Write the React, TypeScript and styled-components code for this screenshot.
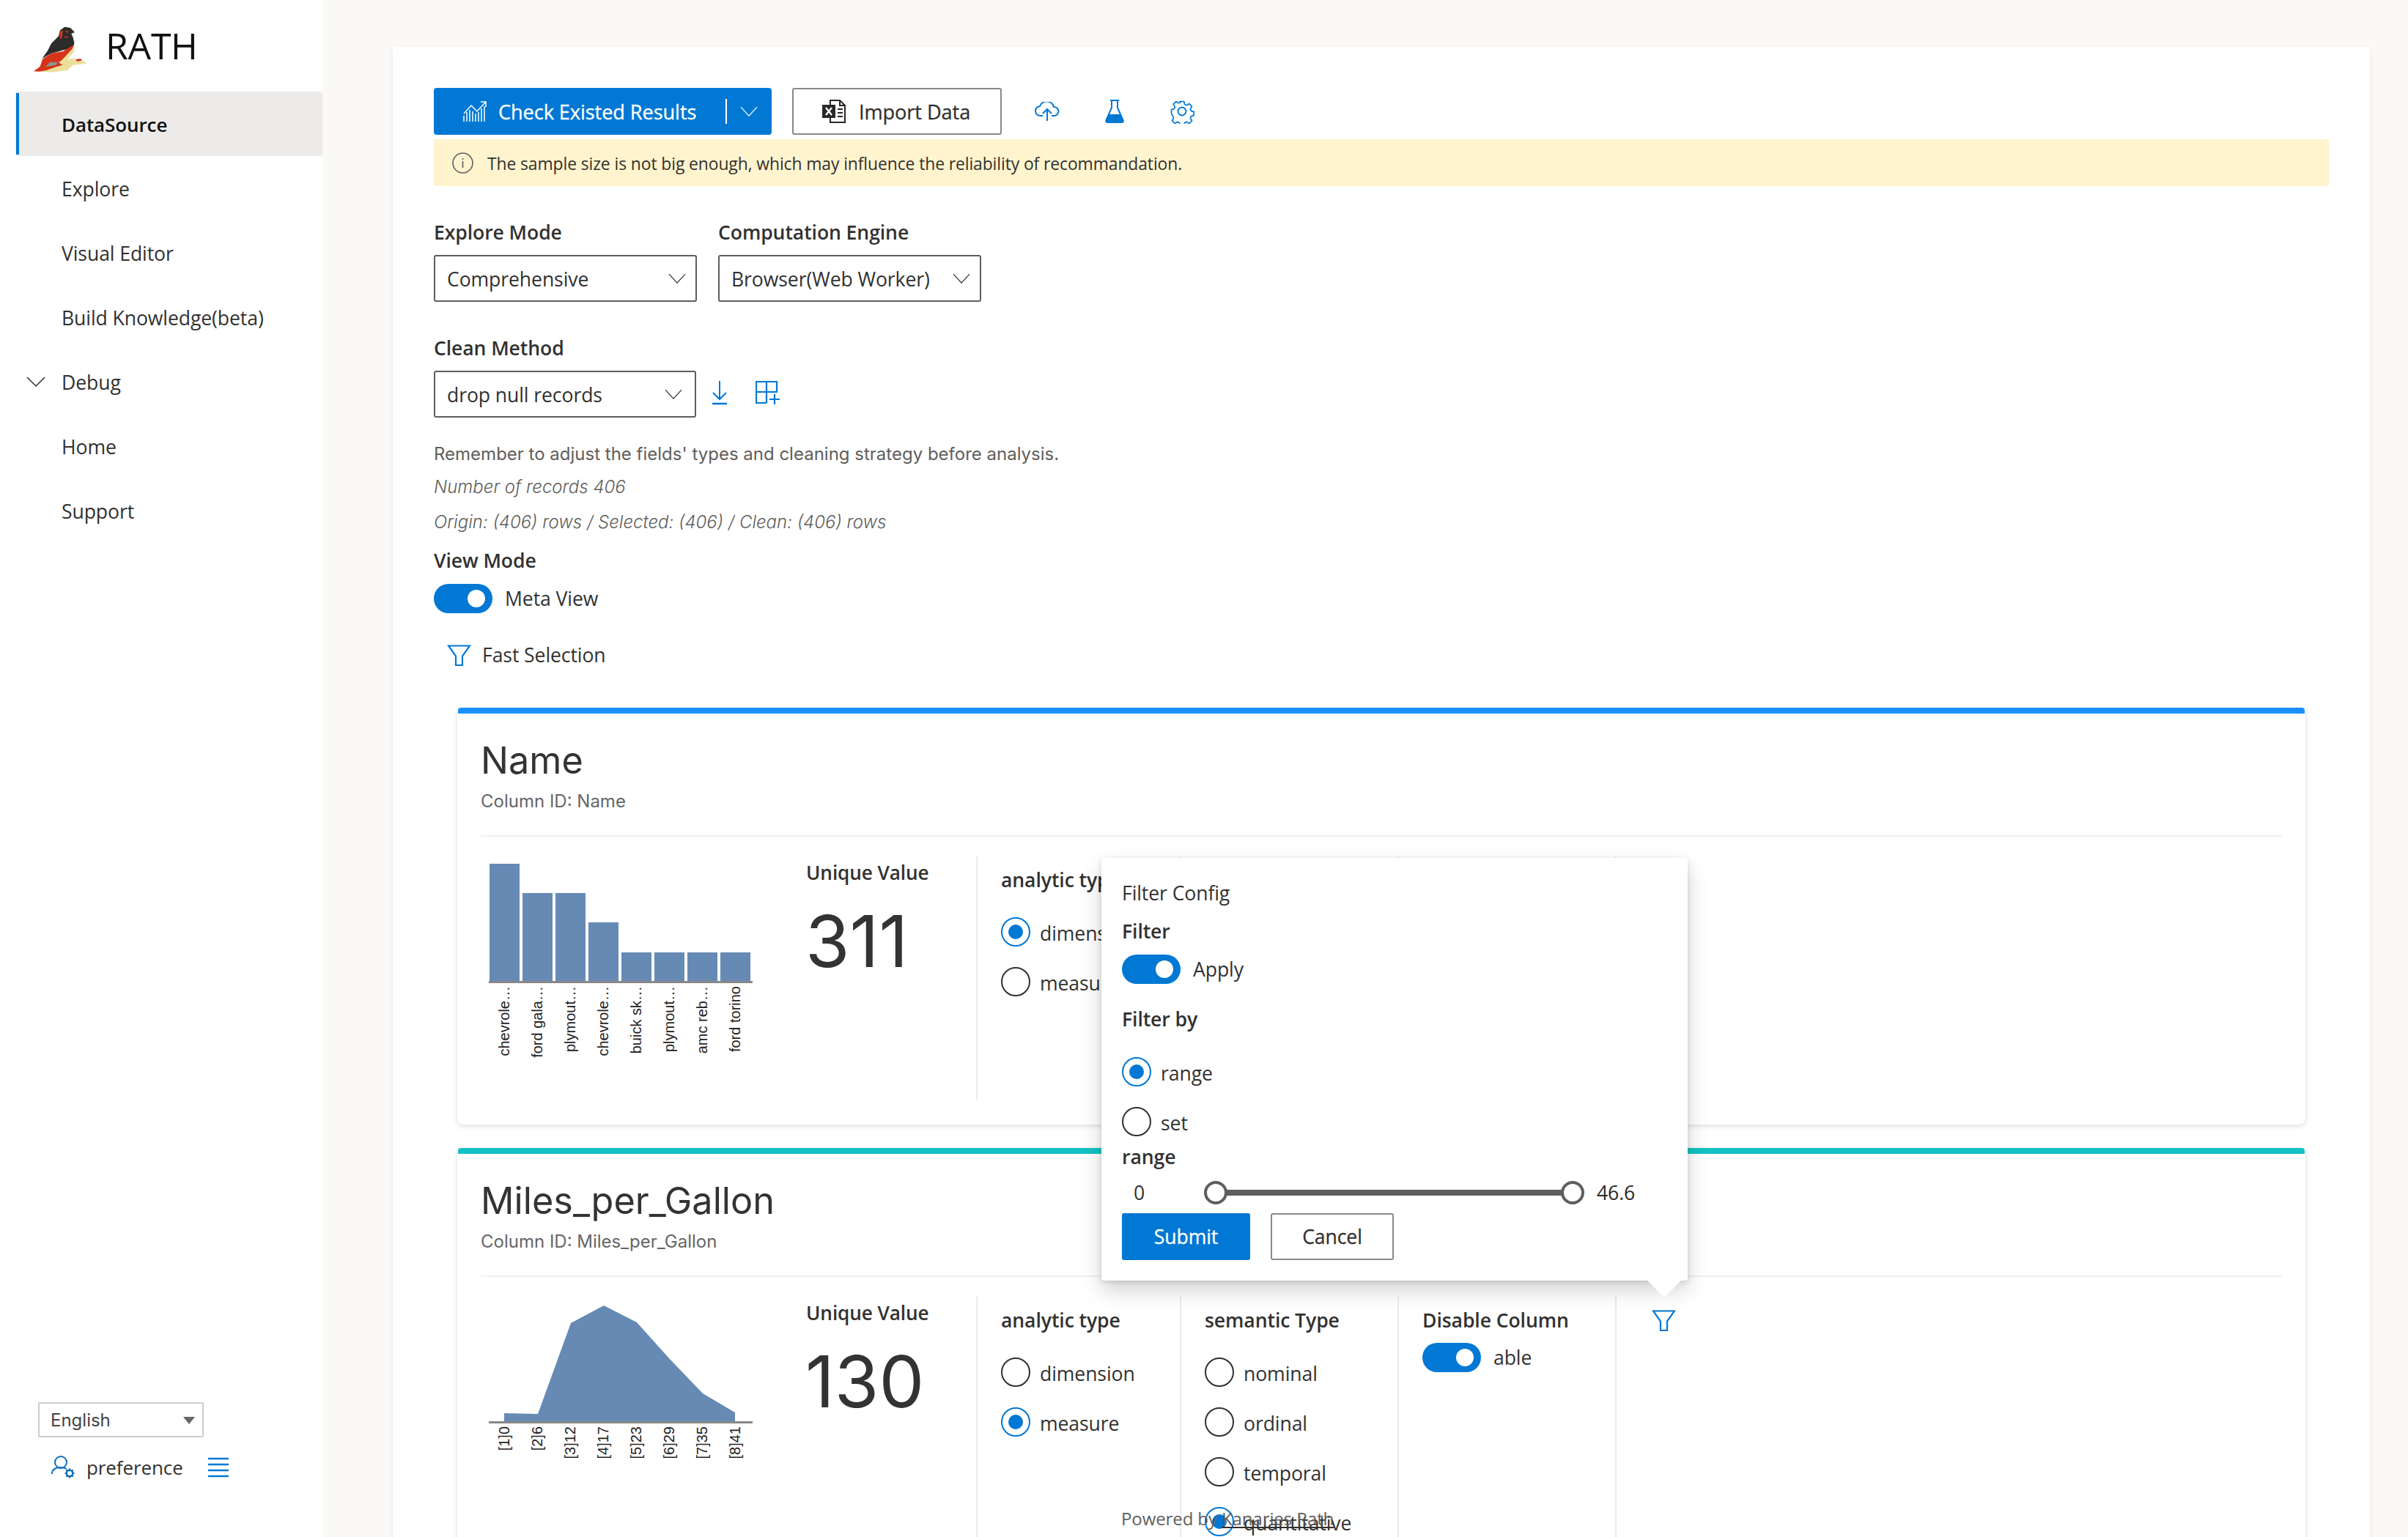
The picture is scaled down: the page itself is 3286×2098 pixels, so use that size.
import React from 'react';
import styled, { createGlobalStyle } from 'styled-components';

const UI = `"Open Sans", "Noto Sans", "Liberation Sans", sans-serif`;
const HV = `Inter, "Liberation Sans", Arial, sans-serif`;
const BLUE = '#0078d4';
const INK = '#323130';

const Global = createGlobalStyle`
  html, body { margin: 0; padding: 0; background: #faf9f8; }
  * { box-sizing: border-box; }
  body { font-family: ${UI}; font-size: 26.6px; color: ${INK}; letter-spacing: -0.1px; }
`;

const Page = styled.div`
  position: relative; display: flex; width: 3286px; height: 2098px; overflow: hidden; background: #faf9f8;
`;
const Sidebar = styled.aside`
  width: 440px; flex: none; height: 100%; background: #fff; display: flex; flex-direction: column;
`;
const Brand = styled.div`
  height: 125px; padding: 20px 0 15px 20px; display: flex; align-items: center; gap: 4px;
`;
const BrandName = styled.span`
  font-size: 50px; color: #111; line-height: 84px; height: 90px; letter-spacing: -0.3px;
`;
const NavList = styled.nav`display: flex; flex-direction: column; margin-left: 21px;`;
const NavRow = styled.div<{ $active?: boolean }>`
  position: relative; height: 88px; display: flex; align-items: center; padding: 2px 0 0 63px; border-radius: 4px;
  background: ${p => (p.$active ? '#edebe9' : 'transparent')};
  color: ${p => (p.$active ? '#111' : INK)};
  font-weight: ${p => (p.$active ? 600 : 400)};
  font-size: ${p => (p.$active ? 26 : 26.6)}px;
  ${p => p.$active && `&::before { content: ''; position: absolute; left: 1px; top: 2px; bottom: 2px; width: 4px; background: ${BLUE}; }`}
`;
const NavCaret = styled.svg`position: absolute; left: 15px; top: 37px;`;
const SideFoot = styled.div`margin-top: auto; padding: 0 0 78px 52px; display: flex; flex-direction: column;`;
const LangSelect = styled.div`
  width: 226px; height: 48px; border: 2px solid #ccc; border-radius: 2px; display: flex; align-items: center;
  justify-content: space-between; padding: 0 10px 0 15px; font-size: 24px; font-family: ${HV}; color: #444; letter-spacing: 0;
`;
const LangCaret = styled.span`
  width: 0; height: 0; border-left: 8px solid transparent; border-right: 8px solid transparent; border-top: 10px solid #666; margin-top: 2px;
`;
const PrefRow = styled.div`display: flex; align-items: center; margin: 24px 0 0 18px; height: 34px;`;
const PrefLabel = styled.span`margin-left: 15px; width: 166px; font-size: 26px;`;

const Main = styled.main`flex: 1; min-width: 0; padding: 64px 52px 0 96px;`;
const Panel = styled.section`
  background: #fff; padding: 56px 56px 0; min-height: 2100px; box-shadow: 0 3px 7px rgba(0,0,0,.06); border-radius: 2px;
`;
const Toolbar = styled.div`display: flex; align-items: center; height: 64px;`;
const Primary = styled.div`
  width: 461px; height: 64px; background: ${BLUE}; color: #fff; border-radius: 4px; display: flex; align-items: center;
  padding-left: 40px; position: relative; font-size: 27.2px;
`;
const PrimaryLabel = styled.span`margin-left: 16px; width: 310px; white-space: nowrap; -webkit-text-stroke: 0.3px #fff;`;
const Sep = styled.span`width: 2px; height: 34px; background: #fff; margin-right: 18px;`;
const Outline = styled.div`
  width: 286px; height: 64px; margin-left: 28px; border: 2px solid #8a8886; border-radius: 3px; display: flex; align-items: center;
  padding-left: 39px; gap: 17px; white-space: nowrap; font-size: 27.2px; -webkit-text-stroke: 0.3px ${INK};
`;
const IconGap = styled.span<{ $w: number; $ml: number }>`
  width: ${p => p.$w}px; margin-left: ${p => p.$ml}px; display: flex; justify-content: center;
`;
const Notice = styled.div`
  margin-top: 6px; height: 64px; background: #fff4ce; display: flex; align-items: center; padding-left: 25px; gap: 19px; font-size: 22.9px;
`;
const NoticeText = styled.span`padding-top: 2px;`;
const FieldRow = styled.div<{ $mt: number }>`display: flex; gap: 29px; margin-top: ${p => p.$mt}px; align-items: flex-end;`;
const Field = styled.div`display: flex; flex-direction: column; gap: 7px;`;
const FieldLabel = styled.label`height: 44px; line-height: 41px; font-weight: 600; font-size: 26.6px;`;
const Select = styled.div<{ $w?: number; $pr?: number }>`
  width: ${p => p.$w ?? 359}px; height: 64px; border: 2px solid #605e5c; border-radius: 3px; display: flex; align-items: center;
  justify-content: space-between; padding: 0 ${p => p.$pr ?? 13}px 0 16px; white-space: nowrap;
`;
const SelectText = styled.span`padding-top: 2px;`;
const InlineIcons = styled.div`display: flex; align-items: center; height: 64px; gap: 39px; margin-left: -7px; padding-bottom: 4px;`;
const Hint = styled.p<{ $mt: number; $italic?: boolean }>`
  margin: ${p => p.$mt}px 0 0; font-family: ${HV}; letter-spacing: 0; font-size: 24px; line-height: 32px; color: #605e5c;
  font-style: ${p => (p.$italic ? 'italic' : 'normal')}; font-weight: ${p => (p.$italic ? 300 : 400)};
`;
const SubLabel = styled.div<{ $mt?: number }>`
  font-weight: 600; font-size: 26.6px; line-height: 36px; margin-top: ${p => p.$mt ?? 0}px;
`;
const ToggleRow = styled.div<{ $mt?: number }>`display: flex; align-items: center; gap: 17px; margin-top: ${p => p.$mt ?? 0}px; height: 40px;`;
const Track = styled.span`
  width: 80px; height: 40px; border-radius: 20px; background: ${BLUE}; display: flex; align-items: center; justify-content: flex-end; padding-right: 10px; flex: none;
`;
const Knob = styled.span`width: 24px; height: 24px; border-radius: 50%; background: #fff;`;
const FastRow = styled.div`display: flex; align-items: center; gap: 15px; margin: 37px 0 0 18px; height: 40px;`;
const Card = styled.article<{ $bar: string; $mt: number }>`
  margin: ${p => p.$mt}px 32px 0; background: #fff; border-radius: 8px; padding: 0 32px 33px;
  box-shadow: 0 2px 7px rgba(0,0,0,.14); position: relative;
  &::before { content: ''; display: block; height: 8px; margin: 0 -31px; background: ${p => p.$bar}; border-radius: 4px 4px 0 0; }
`;
const CardTitle = styled.h2`
  font: 400 50.4px/60px ${HV}; margin: 34px 0 0; color: #333; letter-spacing: 0;
`;
const CardSub = styled.div`font: 400 24px/32px ${HV}; color: #666; margin-top: 10px; letter-spacing: 0;`;
const CardRule = styled.hr`border: 0; height: 2px; background: #f0f0f0; margin: 30px 0 0;`;
const Stats = styled.div`display: flex; margin-top: 27px; min-height: 333px;`;
const ChartCol = styled.div`width: 445px; flex: none;`;
const StatCol = styled.div`width: 233px; flex: none; border-right: 2px solid #ebebeb; padding-top: 2px;`;
const StatLabel = styled.div`font-weight: 600; font-size: 26.2px; line-height: 40px; margin-left: -1px;`;
const StatValue = styled.div`font: 400 98px/110px ${HV}; color: #333; margin-top: 19px; letter-spacing: 0; margin-left: -2px;`;
const ConfigCol = styled.div<{ $w: number }>`
  width: ${p => p.$w}px; flex: none; padding-left: 32px; padding-top: 12px; border-right: 2px solid #ebebeb;
`;
const LastCol = styled.div`flex: 1; padding: 18px 0 0 48px;`;
const ColTitle = styled.div`font-weight: 600; font-size: 26.6px; line-height: 40px; white-space: nowrap;`;
const RadioList = styled.div<{ $mt?: number }>`display: flex; flex-direction: column; gap: 28px; margin-top: ${p => p.$mt ?? 31}px;`;
const RadioRow = styled.div`display: flex; align-items: center; gap: 13px; height: 40px;`;
const RadioDot = styled.span<{ $on?: boolean }>`
  width: 40px; height: 40px; border-radius: 50%; flex: none; border: 2px solid ${p => (p.$on ? BLUE : INK)};
  display: flex; align-items: center; justify-content: center;
  &::after { content: ''; width: 20px; height: 20px; border-radius: 50%; background: ${p => (p.$on ? BLUE : 'transparent')}; }
`;
const RadioText = styled.span`padding-top: 4px; white-space: nowrap;`;
const Popup = styled.div`
  position: absolute; left: 1503px; top: 1171px; width: 800px; height: 577px; background: #fff; border-radius: 4px; padding: 26px 28px 0;
  box-shadow: 0 13px 29px rgba(0,0,0,.18), 0 2px 7px rgba(0,0,0,.12); z-index: 5;
  &::after { content: ''; position: absolute; left: 745px; top: 577px; border-left: 23px solid transparent; border-right: 23px solid transparent; border-top: 23px solid #fff; }
`;
const PopTitle = styled.div`line-height: 44px;`;
const SliderRow = styled.div`display: flex; align-items: center; height: 40px; margin-top: 11px;`;
const SliderMin = styled.span`width: 127px; padding-left: 16px;`;
const SliderTrack = styled.div`
  position: relative; width: 489px; height: 8px; background: #605e5c; border-radius: 4px; margin-left: 0;
`;
const Thumb = styled.span<{ $end?: boolean }>`
  position: absolute; top: -12px; ${p => (p.$end ? 'right: -15px;' : 'left: -15px;')} width: 32px; height: 32px; border-radius: 50%; background: #fff; border: 4px solid #605e5c;
`;
const SliderMax = styled.span`margin-left: 32px; color: #292827;`;
const BtnRow = styled.div`display: flex; gap: 28px; margin-top: 8px;`;
const Btn = styled.div<{ $primary?: boolean; $w: number }>`
  width: ${p => p.$w}px; height: 64px; border-radius: 3px; display: flex; align-items: center; justify-content: center;
  background: ${p => (p.$primary ? BLUE : '#fff')}; color: ${p => (p.$primary ? '#fff' : INK)};
  border: 2px solid ${p => (p.$primary ? BLUE : '#8a8886')}; -webkit-text-stroke: 0.3px ${p => (p.$primary ? '#fff' : INK)};
`;
const Footer = styled.div`
  position: absolute; left: 1530px; top: 2056px; font-size: 24px; line-height: 34px; color: #605e5c; white-space: nowrap; z-index: 4;
`;
const FooterLink = styled.span`color: #605e5c; text-decoration: underline; text-decoration-color: ${INK};`;
const ChartText = styled.text`font: 400 20px "Liberation Sans", Arial, sans-serif; fill: #222; letter-spacing: 0;`;

const Chevron = ({ color = INK, size = 24 }: { color?: string; size?: number }) => (
  <svg width={size} height={size * 0.6} viewBox="0 0 24 14" fill="none"><path d="M1 1l11 12L23 1" stroke={color} strokeWidth="1.2" /></svg>
);
const Funnel = ({ w = 33, h = 29, sw = 2.2 }: { w?: number; h?: number; sw?: number }) => (
  <svg width={w} height={h} viewBox="0 0 33 29" fill="none"><path d="M2 1.500h29L21 15.500v12.500h-9V15.500z" stroke={BLUE} strokeWidth={sw} /></svg>
);
const Bird = () => (
  <svg width="120" height="90" viewBox="0 0 360 270" style={{ flex: 'none' }}>
    <path d="M175 195L205 185 245 178 250 190 290 192 292 201 240 206 215 228 150 236 100 233 130 205z" fill="#ecdf9c" />
    <path d="M78 232L104 212 114 182 150 158 200 150 236 118 244 105 242 142 222 168 180 196 196 206 170 214 130 228 100 233z" fill="#d5341a" />
    <path d="M112 180L135 148 150 118 180 88 186 64 205 50 228 54 246 72 232 78 240 96 244 122 212 142 175 152 150 158z" fill="#2c2c2a" />
    <path d="M126 214L144 194 176 194 170 206z" fill="#8f918e" />
    <path d="M186 70L198 64 192 100 184 96z" fill="#cf3a1d" />
    <path d="M208 66L222 68 220 74 208 72zM202 88L222 90 216 96 204 94z" fill="#b5301a" />
    <path d="M248 184L270 180 276 188 256 192z" fill="#d5341a" />
    <path d="M236 140L244 120 244 150 216 184 190 190z" fill="#ecdf9c" />
  </svg>
);

const ChartIcon = () => (
  <svg width="32" height="28" viewBox="0 0 32 28" fill="none" stroke="#fff" strokeWidth="1.5">
    <path d="M1 28v-8M5 28V15M9 28V12M13 28V14M17 28V17M21 28V15M25 28V10M29 28V7" />
    <path d="M1 17L11 6l8 8L30 2M24 1h7v7" />
  </svg>
);
const Excel = () => (
  <svg width="33" height="32" viewBox="0 0 33 32" fill="none">
    <path d="M11 1h13l7 7v23H11z" stroke="#292827" strokeWidth="2" fill="#fff" />
    <path d="M24 1v7h7" stroke="#292827" strokeWidth="2" />
    <path d="M21 13h7M21 18h7M21 23h7" stroke="#292827" strokeWidth="2" />
    <rect x="0" y="7" width="18" height="18" fill="#292827" />
    <path d="M5 11l8 10M13 11l-8 10" stroke="#fff" strokeWidth="2.4" />
  </svg>
);
const Cloud = () => (
  <svg width="34" height="26" viewBox="0 0 34 26" fill="none" stroke={BLUE} strokeWidth="2">
    <path d="M11 19H8a6.5 6.5 0 0 1-1-13 10 10 0 0 1 19 1 6 6 0 0 1 1 12h-4" />
    <path d="M17 26V11M11 16l6-6 6 6" />
  </svg>
);
const Flask = () => (
  <svg width="26" height="32" viewBox="0 0 26 32" fill="none">
    <path d="M7 1h12M9 1v10L1.500 28a2 2 0 0 0 2 3h19a2 2 0 0 0 2-3L17 11V1" stroke={BLUE} strokeWidth="2" />
    <path d="M5.500 20h15l4 9a2 2 0 0 1-2 2h-19a2 2 0 0 1-2-2z" fill={BLUE} />
  </svg>
);
const Gear = () => (
  <svg width="34" height="34" viewBox="0 0 34 34" fill="none" stroke={BLUE} strokeWidth="1.9" strokeLinejoin="round">
    <circle cx="17" cy="17" r="5.500" />
    <path d="M14 2h6l1 4.500 3 1.300 4-2.400 4 4.200-2.400 3.900 1.200 3 4.200 1v5.800l-4.200 1-1.200 3 2.400 3.900-4 4.200-4-2.400-3 1.300-1 4.500h-6l-1-4.500-3-1.300-4 2.400-4-4.200 2.400-3.900-1.200-3L.9 20v-5.800l4.200-1 1.200-3-2.400-3.900 4-4.200 4 2.400 3-1.300z" transform="translate(1.700 1.700) scale(.9)" />
  </svg>
);
const Info = () => (
  <svg width="29" height="29" viewBox="0 0 29 29" fill="none" stroke="#605e5c" strokeWidth="1.600">
    <circle cx="14.500" cy="14.500" r="13.500" /><path d="M14.500 12v9M14.500 8v2" />
  </svg>
);
const Download = () => (
  <svg width="20" height="33" viewBox="0 0 20 33" fill="none" stroke={BLUE} strokeWidth="2">
    <path d="M10 0v25M1 16l9 9 9-9" /><path d="M0 31h20" strokeWidth="2.600" />
  </svg>
);
const TableAdd = () => (
  <svg width="33" height="33" viewBox="0 0 33 33" fill="none" stroke={BLUE} strokeWidth="2.200">
    <path d="M1 1h28v14H1zM15 1v29M1 15v15h14" /><path d="M19 25h14M26 18v14" />
  </svg>
);
const PrefIcon = () => (
  <svg width="33" height="32" viewBox="0 0 33 32" fill="none" stroke="#106ebe" strokeWidth="2">
    <circle cx="13" cy="9" r="8" />
    <path d="M1 25c0-6 4-9 12-9 3 0 6 .7 8 2" />
    <circle cx="25" cy="24" r="4.200" strokeWidth="2.400" />
    <path d="M25 17.500v3M25 27.500v3M18.500 24h3M28.500 24h3M20.400 19.400l2.100 2.100M27.500 26.500l2.100 2.100M20.400 28.600l2.100-2.100M27.500 21.500l2.100-2.100" strokeWidth="2.200" />
  </svg>
);
const Burger = () => (
  <svg width="28" height="28" viewBox="0 0 28 28" stroke={BLUE} strokeWidth="2.400"><path d="M0 2h28M0 10h28M0 18h28M0 26h28" /></svg>
);

const AXIS = '#888';
const NAMES = ['chevrole…', 'ford gala…', 'plymout…', 'chevrole…', 'buick sk…', 'plymout…', 'amc reb…', 'ford torino'];
const HEIGHTS = [161, 121, 121, 81, 40, 40, 40, 40];
const BINS = ['[1]0', '[2]6', '[3]12', '[4]17', '[5]23', '[6]29', '[7]35', '[8]41'];

const BarChart = () => (
  <svg width="445" height="300" viewBox="0 0 445 300">
    {HEIGHTS.map((h, i) => <rect key={i} x={12 + i * 45} y={171 - h} width={41} height={h} fill="#678ab5" />)}
    <path d="M11 171.500H371" stroke={AXIS} strokeWidth="3" />
    {NAMES.map((n, i) => (
      <ChartText key={i} textAnchor="end" transform={`translate(${39 + i * 45} 177) rotate(-90)`}>{n}</ChartText>
    ))}
  </svg>
);
const AreaChart = () => (
  <svg width="445" height="300" viewBox="0 0 445 300">
    <path d="M32 171L32 159 78 160 123 36 168 12 213 35 257 84 303 132 347 158 347 171Z" fill="#678ab5" />
    <path d="M11 171.500H371" stroke={AXIS} strokeWidth="3" />
    {BINS.map((n, i) => (
      <ChartText key={i} textAnchor="end" transform={`translate(${39 + i * 45} 177) rotate(-90)`}>{n}</ChartText>
    ))}
  </svg>
);

const Radio = ({ on, children }: { on?: boolean; children: React.ReactNode }) => (
  <RadioRow><RadioDot $on={on} /><RadioText>{children}</RadioText></RadioRow>
);

const FieldCard = ({ title, bar, mt, unique, chart, dimension, semantic }: {
  title: string; bar: string; mt: number; unique: string; chart: React.ReactNode; dimension: boolean; semantic: string;
}) => (
  <Card $bar={bar} $mt={mt}>
    <CardTitle>{title}</CardTitle>
    <CardSub>Column ID: {title}</CardSub>
    <CardRule />
    <Stats>
      <ChartCol>{chart}</ChartCol>
      <StatCol>
        <StatLabel>Unique Value</StatLabel>
        <StatValue>{unique}</StatValue>
      </StatCol>
      <ConfigCol $w={278}>
        <ColTitle>analytic type</ColTitle>
        <RadioList>
          <Radio on={dimension}>dimension</Radio>
          <Radio on={!dimension}>measure</Radio>
        </RadioList>
      </ConfigCol>
      <ConfigCol $w={297}>
        <ColTitle>semantic Type</ColTitle>
        <RadioList>
          {['nominal', 'ordinal', 'temporal', 'quantitative'].map(s => <Radio key={s} on={s === semantic}>{s}</Radio>)}
        </RadioList>
      </ConfigCol>
      <ConfigCol $w={297}>
        <ColTitle>Disable Column</ColTitle>
        <ToggleRow $mt={11}><Track><Knob /></Track><span>able</span></ToggleRow>
      </ConfigCol>
      <LastCol><Funnel /></LastCol>
    </Stats>
  </Card>
);

export default function App() {
  return (
    <Page>
      <Global />
      <Sidebar>
        <Brand><Bird /><BrandName>RATH</BrandName></Brand>
        <NavList>
          <NavRow $active>DataSource</NavRow>
          <NavRow>Explore</NavRow>
          <NavRow>Visual Editor</NavRow>
          <NavRow>Build Knowledge(beta)</NavRow>
          <NavRow>
            <NavCaret width="26" height="14" viewBox="0 0 26 14" fill="none"><path d="M1 1l12 12L25 1" stroke={INK} strokeWidth="1.500" /></NavCaret>
            Debug
          </NavRow>
          <NavRow>Home</NavRow>
          <NavRow>Support</NavRow>
        </NavList>
        <SideFoot>
          <LangSelect>English<LangCaret /></LangSelect>
          <PrefRow><PrefIcon /><PrefLabel>preference</PrefLabel><Burger /></PrefRow>
        </SideFoot>
      </Sidebar>
      <Main>
        <Panel>
          <Toolbar>
            <Primary>
              <ChartIcon />
              <PrimaryLabel>Check Existed Results</PrimaryLabel>
              <Sep />
              <Chevron color="#fff" />
            </Primary>
            <Outline><Excel />Import Data</Outline>
            <IconGap $w={34} $ml={45}><Cloud /></IconGap>
            <IconGap $w={34} $ml={58}><Flask /></IconGap>
            <IconGap $w={34} $ml={58}><Gear /></IconGap>
          </Toolbar>
          <Notice><Info /><NoticeText>The sample size is not big enough, which may influence the reliability of recommandation.</NoticeText></Notice>
          <FieldRow $mt={43}>
            <Field><FieldLabel>Explore Mode</FieldLabel><Select><SelectText>Comprehensive</SelectText><Chevron /></Select></Field>
            <Field><FieldLabel>Computation Engine</FieldLabel><Select><SelectText>Browser(Web Worker)</SelectText><Chevron /></Select></Field>
          </FieldRow>
          <FieldRow $mt={43}>
            <Field><FieldLabel>Clean Method</FieldLabel><Select $w={358} $pr={17}><SelectText>drop null records</SelectText><Chevron /></Select></Field>
            <InlineIcons><Download /><TableAdd /></InlineIcons>
          </FieldRow>
          <Hint $mt={34}>Remember to adjust the fields' types and cleaning strategy before analysis.</Hint>
          <Hint $mt={13} $italic>Number of records 406</Hint>
          <Hint $mt={16} $italic>Origin: (406) rows / Selected: (406) / Clean: (406) rows</Hint>
          <SubLabel $mt={18}>View Mode</SubLabel>
          <ToggleRow $mt={14}><Track><Knob /></Track><span>Meta View</span></ToggleRow>
          <FastRow><Funnel />Fast Selection</FastRow>
          <FieldCard title="Name" bar="#1890ff" mt={52} unique="311" chart={<BarChart />} dimension semantic="nominal" />
          <FieldCard title="Miles_per_Gallon" bar="#13c2c2" mt={32} unique="130" chart={<AreaChart />} dimension={false} semantic="quantitative" />
        </Panel>
      </Main>
      <Popup>
        <PopTitle>Filter Config</PopTitle>
        <SubLabel $mt={12}>Filter</SubLabel>
        <ToggleRow $mt={14}><Track><Knob /></Track><span>Apply</span></ToggleRow>
        <SubLabel $mt={30}>Filter by</SubLabel>
        <RadioList $mt={34}>
          <Radio on>range</Radio>
          <Radio>set</Radio>
        </RadioList>
        <SubLabel $mt={10}>range</SubLabel>
        <SliderRow>
          <SliderMin>0</SliderMin>
          <SliderTrack><Thumb /><Thumb $end /></SliderTrack>
          <SliderMax>46.6</SliderMax>
        </SliderRow>
        <BtnRow>
          <Btn $primary $w={175}>Submit</Btn>
          <Btn $w={168}>Cancel</Btn>
        </BtnRow>
      </Popup>
      <Footer>Powered by <FooterLink>Kanaries Rath</FooterLink></Footer>
    </Page>
  );
}
